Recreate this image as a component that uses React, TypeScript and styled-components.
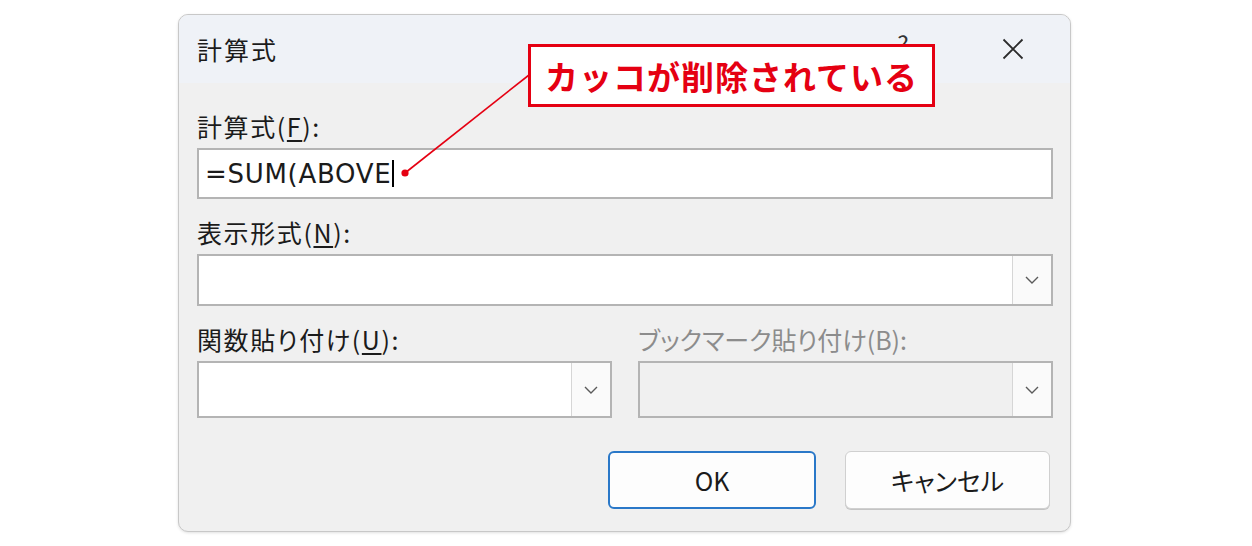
import React from "react";
import styled, { createGlobalStyle } from "styled-components";

const Global = createGlobalStyle`
  html, body { margin: 0; padding: 0; background: #ffffff; }
  body { font-family: "Noto Sans CJK JP", "Noto Sans", sans-serif; }
  * { box-sizing: border-box; }
`;

const Page = styled.div`
  position: relative;
  width: 1252px;
  height: 546px;
  padding: 14px 0 0 178px;
  background: #ffffff;
  overflow: hidden;
`;

const Dialog = styled.div`
  width: 893px;
  height: 518px;
  border: 1px solid #c8c8c8;
  border-radius: 10px;
  background: #f0f0f0;
  overflow: hidden;
  display: flex;
  flex-direction: column;
  box-shadow: 0 1px 3px rgba(0, 0, 0, 0.12);
`;

const TitleBar = styled.div`
  height: 68px;
  flex: none;
  background: #eff2f7;
  display: flex;
  align-items: center;
  padding: 0 0 0 18px;
`;

const Title = styled.div`
  flex: 1;
  font-size: 25px;
  letter-spacing: 2px;
  color: #1b1b1b;
  font-weight: 400;
`;

const HelpMark = styled.div`
  width: 40px;
  text-align: center;
  font-size: 24px;
  color: #333;
  margin-right: 68px;
  margin-top: -12px;
`;

const CloseBtn = styled.div`
  width: 44px;
  height: 44px;
  display: flex;
  align-items: center;
  justify-content: center;
  margin-right: 35px;
`;

const Body = styled.div`
  flex: 1;
  display: flex;
  flex-direction: column;
  gap: 18px;
  padding: 28px 17px 22px 18px;
`;

const Field = styled.div`
  display: flex;
  flex-direction: column;
  gap: 7px;
`;

const Label = styled.div<{ $disabled?: boolean }>`
  height: 30px;
  line-height: 30px;
  font-size: 25px;
  letter-spacing: ${(p) => (p.$disabled ? "0px" : "1.6px")};
  font-feature-settings: "palt";
  color: ${(p) => (p.$disabled ? "#8c8c8c" : "#1b1b1b")};
  white-space: nowrap;
  u { text-underline-offset: 3px; text-decoration-thickness: 1.5px; }
`;

const TextBox = styled.div`
  height: 51px;
  border: 2px solid #b4b4b4;
  background: #ffffff;
  display: flex;
  align-items: center;
  padding-left: 6px;
`;

const InputText = styled.span`
  font-family: "DejaVu Sans", "Noto Sans", sans-serif;
  font-size: 26px;
  color: #1b1b1b;
  letter-spacing: 0.7px;
`;

const Caret = styled.span`
  display: inline-block;
  width: 2px;
  height: 27px;
  background: #000;
  margin-left: 1px;
`;

const Combo = styled.div<{ $h: number; $disabled?: boolean }>`
  height: ${(p) => p.$h}px;
  border: 2px solid #b4b4b4;
  background: ${(p) => (p.$disabled ? "#f0f0f0" : "#ffffff")};
  display: flex;
  justify-content: flex-end;
`;

const DropButton = styled.div`
  width: 39px;
  height: 100%;
  background: #fafafa;
  border-left: 1px solid #d6d6d6;
  display: flex;
  align-items: center;
  justify-content: center;
`;

const Columns = styled.div`
  display: grid;
  grid-template-columns: 415px 415px;
  column-gap: 26px;
`;

const ButtonRow = styled.div`
  display: flex;
  justify-content: flex-end;
  gap: 29px;
  padding-right: 3px;
  margin-top: 15px;
`;

const Button = styled.div<{ $w: number; $primary?: boolean }>`
  width: ${(p) => p.$w}px;
  height: 58px;
  border-radius: 6px;
  background: #fdfdfd;
  border: ${(p) => (p.$primary ? "2px solid #2a78c8" : "1px solid #d0d0d0")};
  box-shadow: ${(p) => (p.$primary ? "none" : "0 1px 0 #c4c4c4")};
  display: flex;
  align-items: center;
  justify-content: center;
  font-size: 25px;
  color: #1b1b1b;
  font-feature-settings: "palt";
`;

const Overlay = styled.svg`
  position: absolute;
  left: 0;
  top: 0;
  pointer-events: none;
`;

const Callout = styled.div`
  position: absolute;
  left: 528px;
  top: 44px;
  width: 407px;
  height: 63px;
  border: 3.5px solid #e50012;
  background: #ffffff;
  display: flex;
  align-items: center;
  justify-content: center;
  font-size: 33px;
  font-weight: 700;
  color: #e50012;
  letter-spacing: 1px;
  white-space: nowrap;
`;

const Chevron = () => (
  <svg width="14" height="8" viewBox="0 0 14 8">
    <path d="M1 1 L7 7 L13 1" fill="none" stroke="#5a5a5a" strokeWidth="1.4" />
  </svg>
);

const CloseIcon = () => (
  <svg width="22" height="22" viewBox="0 0 22 22">
    <path d="M1.5 1.5 L20.5 20.5 M20.5 1.5 L1.5 20.5" stroke="#2b2b2b" strokeWidth="1.8" fill="none" />
  </svg>
);

export default function App() {
  return (
    <>
      <Global />
      <Page>
        <Dialog>
          <TitleBar>
            <Title>計算式</Title>
            <HelpMark>?</HelpMark>
            <CloseBtn>
              <CloseIcon />
            </CloseBtn>
          </TitleBar>
          <Body>
            <Field>
              <Label>
                計算式(<u>F</u>):
              </Label>
              <TextBox>
                <InputText>=SUM(ABOVE</InputText>
                <Caret />
              </TextBox>
            </Field>
            <Field>
              <Label>
                表示形式(<u>N</u>):
              </Label>
              <Combo $h={52}>
                <DropButton>
                  <Chevron />
                </DropButton>
              </Combo>
            </Field>
            <Columns>
              <Field>
                <Label>
                  関数貼り付け(<u>U</u>):
                </Label>
                <Combo $h={57}>
                  <DropButton>
                    <Chevron />
                  </DropButton>
                </Combo>
              </Field>
              <Field>
                <Label $disabled>ブックマーク貼り付け(B):</Label>
                <Combo $h={57} $disabled>
                  <DropButton>
                    <Chevron />
                  </DropButton>
                </Combo>
              </Field>
            </Columns>
            <ButtonRow>
              <Button $w={208} $primary>
                OK
              </Button>
              <Button $w={205}>キャンセル</Button>
            </ButtonRow>
          </Body>
        </Dialog>
        <Overlay width="1252" height="546">
          <line x1="529" y1="75" x2="405" y2="173" stroke="#e50012" strokeWidth="1.6" />
          <circle cx="405" cy="173" r="3.6" fill="#e50012" />
        </Overlay>
        <Callout>カッコが削除されている</Callout>
      </Page>
    </>
  );
}
